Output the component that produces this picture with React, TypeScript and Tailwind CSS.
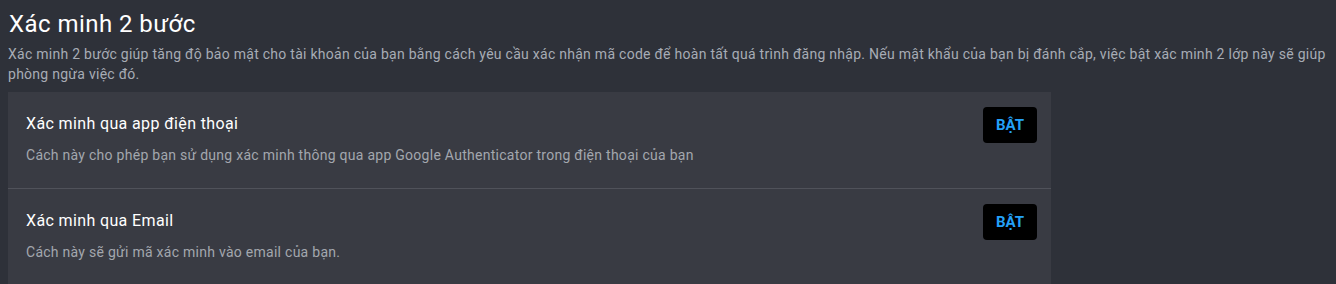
const methods = [
  {
    title: "Xác minh qua app điện thoại",
    desc: "Cách này cho phép bạn sử dụng xác minh thông qua app Google Authenticator trong điện thoại của bạn",
  },
  {
    title: "Xác minh qua Email",
    desc: "Cách này sẽ gửi mã xác minh vào email của bạn.",
  },
];

const App = () => {
  return (
    <div className="min-h-[284px] bg-[#2e3139] px-2 pt-2 font-['Roboto',sans-serif]">
      <h1 className="pl-[1px] text-2xl leading-8 tracking-[0.45px] text-white">Xác minh 2 bước</h1>
      <p className="mt-1 text-sm leading-5 tracking-[0.27px] text-[#a7acb5]">
        Xác minh 2 bước giúp tăng độ bảo mật cho tài khoản của bạn bằng cách yêu cầu xác nhận mã code để hoàn tất quá trình đăng nhập. Nếu mật khẩu của bạn bị đánh cắp, việc bật xác minh 2 lớp này sẽ giúp phòng ngừa việc đó.
      </p>
      <div className="mt-2 w-[1043px] bg-[#393b43]">
        {methods.map((m, i) => (
          <div
            key={m.title}
            className={`flex items-start justify-between pl-[18px] pr-[14px] pt-[15px] pb-[23px] ${
              i < methods.length - 1 ? "border-b border-[#50525a]" : ""
            }`}
          >
            <div className="pt-[5px]">
              <h3 className="text-base leading-6 tracking-[0.37px] text-white">{m.title}</h3>
              <p className="mt-[9px] text-sm leading-5 tracking-[0.27px] text-[#a3a7ae]">{m.desc}</p>
            </div>
            <button className="h-9 w-[54px] rounded bg-black text-[15px] font-bold text-[#24a0f8]">
              BẬT
            </button>
          </div>
        ))}
      </div>
    </div>
  );
};

export default App;
